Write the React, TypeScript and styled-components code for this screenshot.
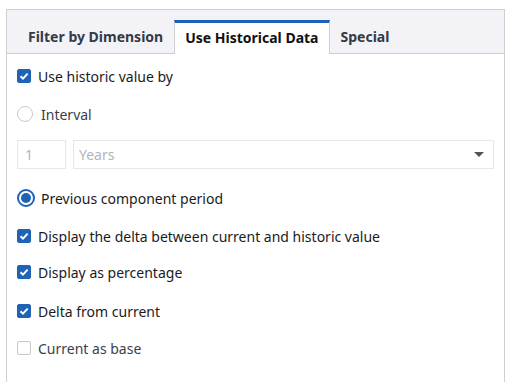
import React from "react";
import styled, { createGlobalStyle } from "styled-components";

const Global = createGlobalStyle`
  html, body { margin: 0; padding: 0; background: #fff; }
  body { font-family: "Noto Sans", "Open Sans", sans-serif; color: #1b1b1b; }
`;

const Panel = styled.div`
  margin: 9px 0 0 6px;
  width: 499px;
  height: 380px;
  border: 1px solid #cfcfd3;
  border-bottom: none;
  box-sizing: border-box;
  display: flex;
  flex-direction: column;
`;

const TabStrip = styled.div`
  display: flex;
  align-items: flex-end;
  height: 44px;
  background: #f3f3f7;
  border-bottom: 1px solid #cfcfd3;
  padding-left: 10px;
  box-sizing: border-box;
`;

const Tab = styled.div<{ $active?: boolean }>`
  height: ${(p) => (p.$active ? "34px" : "33px")};
  margin-bottom: ${(p) => (p.$active ? "-1px" : "0")};
  box-sizing: border-box;
  padding: 0 ${(p) => (p.$active ? "10px" : "11px")};
  display: flex;
  align-items: center;
  font-weight: 700;
  font-size: 14px;
  color: ${(p) => (p.$active ? "#111" : "#333a48")};
  background: ${(p) => (p.$active ? "#fff" : "transparent")};
  border-top: ${(p) => (p.$active ? "3px solid #1b62b8" : "none")};
  border-left: ${(p) => (p.$active ? "1px solid #cfcfd3" : "none")};
  border-right: ${(p) => (p.$active ? "1px solid #cfcfd3" : "none")};
  padding-bottom: ${(p) => (p.$active ? "2px" : "0")};
`;

const Body = styled.div`
  display: flex;
  flex-direction: column;
  padding: 10px 10px 0 10px;
`;

const Row = styled.label<{ $muted?: boolean; $after?: number; $gap?: number }>`
  display: flex;
  align-items: center;
  gap: ${(p) => p.$gap ?? 7}px;
  height: 24px;
  margin-bottom: ${(p) => p.$after ?? 14}px;
  font-size: 14px;
  color: ${(p) => (p.$muted ? "#3a3f4a" : "#1b1b1b")};
`;

const Check = styled.span<{ $on?: boolean }>`
  width: 14px;
  height: 14px;
  box-sizing: border-box;
  border-radius: 2px;
  background: ${(p) => (p.$on ? "#1f63b6" : "#fff")};
  border: 1px solid ${(p) => (p.$on ? "#1f63b6" : "#c8c8cc")};
  display: flex;
  align-items: center;
  justify-content: center;
  flex: none;
`;

const Radio = styled.span<{ $on?: boolean }>`
  width: ${(p) => (p.$on ? "18px" : "16px")};
  height: ${(p) => (p.$on ? "18px" : "16px")};
  box-sizing: border-box;
  border-radius: 50%;
  border: ${(p) => (p.$on ? "2px solid #1f63b6" : "1px solid #c8c8cc")};
  background: #fff;
  display: flex;
  align-items: center;
  justify-content: center;
  flex: none;
  &::after {
    content: "";
    display: ${(p) => (p.$on ? "block" : "none")};
    width: 10px;
    height: 10px;
    border-radius: 50%;
    background: #1f63b6;
  }
`;

const Fields = styled.div`
  display: flex;
  gap: 7px;
  margin: 0 0 17px 0;
  height: 29px;
`;

const NumberBox = styled.div`
  width: 49px;
  box-sizing: border-box;
  border: 1px solid #e8e8ec;
  display: flex;
  align-items: center;
  padding-left: 7px;
  font-size: 14px;
  color: #b4b4b8;
`;

const SelectBox = styled.div`
  flex: 1;
  box-sizing: border-box;
  border: 1px solid #e8e8ec;
  display: flex;
  align-items: center;
  justify-content: space-between;
  padding: 0 9px 0 5px;
  font-size: 14px;
  color: #b4b4b8;
`;

const Caret = styled.span`
  width: 0;
  height: 0;
  border-left: 5px solid transparent;
  border-right: 5px solid transparent;
  border-top: 5px solid #555;
`;

const Tick = () => (
  <svg width="10" height="10" viewBox="0 0 10 10">
    <path d="M1.5 5.2 L4 7.6 L8.6 2.6" fill="none" stroke="#fff" strokeWidth="2" />
  </svg>
);

export default function App() {
  return (
    <>
      <Global />
      <Panel>
        <TabStrip>
          <Tab>Filter by Dimension</Tab>
          <Tab $active>Use Historical Data</Tab>
          <Tab>Special</Tab>
        </TabStrip>
        <Body>
          <Row $after={14}>
            <Check $on><Tick /></Check>
            Use historic value by
          </Row>
          <Row $muted $gap={8} $after={14}>
            <Radio />
            Interval
          </Row>
          <Fields>
            <NumberBox>1</NumberBox>
            <SelectBox>
              Years
              <Caret />
            </SelectBox>
          </Fields>
          <Row $gap={6}>
            <Radio $on />
            Previous component period
          </Row>
          <Row $after={12}>
            <Check $on><Tick /></Check>
            Display the delta between current and historic value
          </Row>
          <Row $after={15}>
            <Check $on><Tick /></Check>
            Display as percentage
          </Row>
          <Row $after={13}>
            <Check $on><Tick /></Check>
            Delta from current
          </Row>
          <Row $muted>
            <Check />
            Current as base
          </Row>
        </Body>
      </Panel>
    </>
  );
}
